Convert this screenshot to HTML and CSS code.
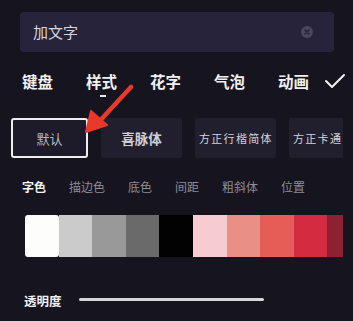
FILE: index.html
```html
<!DOCTYPE html>
<html>
<head>
<meta charset="utf-8">
<link rel="stylesheet" href="styles.css">
</head>
<body>
<div class="page">
  <div class="search">
    <span class="search-text">加文字</span>
    <span class="clear"><svg width="12" height="12" viewBox="0 0 12 12"><circle cx="6" cy="6" r="6" fill="#4a475c"/><path d="M4 4 L8 8 M8 4 L4 8" stroke="#25223a" stroke-width="1.6" stroke-linecap="round"/></svg></span>
  </div>
  <div class="tabs">
    <span class="tab">键盘</span>
    <span class="tab active">样式</span>
    <span class="tab">花字</span>
    <span class="tab">气泡</span>
    <span class="tab">动画</span>
    <span class="check"><svg width="22" height="16" viewBox="0 0 22 16"><path d="M2 8 L8 14 L20 2" fill="none" stroke="#f2f2f2" stroke-width="2" stroke-linecap="round" stroke-linejoin="round"/></svg></span>
  </div>
  <div class="fonts">
    <div class="card selected">默认</div>
    <div class="card bold">喜脉体</div>
    <div class="card script">方正行楷简体</div>
    <div class="card script">方正卡通</div>
  </div>
  <div class="subtabs">
    <span class="sub on">字色</span>
    <span class="sub">描边色</span>
    <span class="sub">底色</span>
    <span class="sub">间距</span>
    <span class="sub">粗斜体</span>
    <span class="sub">位置</span>
  </div>
  <div class="swatches">
    <span class="sw first" style="background:#fdfdfb"></span>
    <span class="sw" style="background:#cbcbcb"></span>
    <span class="sw" style="background:#999999"></span>
    <span class="sw" style="background:#6a6a6a"></span>
    <span class="sw" style="background:#020202"></span>
    <span class="sw" style="background:#f6ccd1"></span>
    <span class="sw" style="background:#ea8f85"></span>
    <span class="sw" style="background:#e65d57"></span>
    <span class="sw" style="background:#d52b41"></span>
    <span class="sw" style="background:#8c2133"></span>
  </div>
  <div class="opacity">
    <span class="op-label">透明度</span>
    <span class="slider"></span>
  </div>
  <svg class="arrow" width="60" height="60" viewBox="0 0 60 60">
    <path d="M50 3 L14 42" stroke="#e8392b" stroke-width="4.5" stroke-linecap="round"/>
    <path d="M5 48 L10 27 L26 41 Z" fill="#e8392b" stroke="#e8392b" stroke-width="2" stroke-linejoin="round"/>
  </svg>
</div>
</body>
</html>
```
FILE: styles.css
```css
html, body {
  margin: 0;
  padding: 0;
  background: #16141f;
}
body {
  font-family: "Noto Sans CJK SC", "Noto Sans", sans-serif;
  width: 353px;
  height: 321px;
  overflow: hidden;
}
.page {
  position: relative;
  width: 353px;
  height: 321px;
  padding-top: 12px;
  box-sizing: border-box;
}
.search {
  margin-left: 20px;
  width: 314px;
  height: 40px;
  background: #26233a;
  border-radius: 3px;
  display: flex;
  align-items: center;
  justify-content: space-between;
  padding: 0 21px 0 13px;
  box-sizing: border-box;
}
.search-text {
  color: #d8d6de;
  font-size: 15px;
  line-height: 20px;
}
.clear {
  display: flex;
}
.tabs {
  display: flex;
  align-items: center;
  height: 26px;
  margin-top: 16px;
  padding-left: 22px;
  gap: 32px;
}
.tab {
  position: relative;
  color: #f0f0f0;
  font-size: 15.5px;
  font-weight: 700;
  line-height: 26px;
  width: 32px;
}
.tab.active::after {
  content: "";
  position: absolute;
  left: 14px;
  top: 27px;
  width: 6px;
  height: 2px;
  background: #e8e8e8;
}
.check {
  display: flex;
  margin-left: -18px;
}
.fonts {
  display: flex;
  gap: 13px;
  margin-top: 24px;
  margin-left: 11px;
  width: 332px;
  overflow: hidden;
  height: 40px;
}
.card {
  flex: 0 0 81px;
  height: 40px;
  background: #211f2e;
  color: #c8c6cc;
  font-size: 12.5px;
  display: flex;
  align-items: center;
  justify-content: center;
  box-sizing: border-box;
  border-radius: 2px;
}
.card.selected {
  flex-basis: 77px;
  border: 2px solid #eeeeee;
  border-radius: 3px;
  background: #1d1b29;
  color: #b9b7bf;
  font-size: 13px;
}
.card.bold {
  font-weight: 700;
  color: #d0ced4;
  font-size: 13.5px;
}
.card.script {
  font-size: 11px;
  letter-spacing: 1.3px;
  color: #d4d2d8;
  font-family: "Noto Sans CJK JP", serif;
  justify-content: flex-start;
  padding-left: 4px;
}
.subtabs {
  display: flex;
  gap: 23px;
  margin-top: 20px;
  padding-left: 22px;
  height: 18px;
  align-items: center;
}
.sub {
  color: #8e8c96;
  font-size: 12px;
  line-height: 18px;
}
.sub.on {
  color: #f2f2f2;
  font-weight: 700;
}
.swatches {
  display: flex;
  margin-top: 19px;
  margin-left: 25px;
  width: 318px;
  height: 42px;
  overflow: hidden;
}
.sw {
  flex: 0 0 33.6px;
  height: 42px;
}
.sw.first {
  border-radius: 3px;
}
.opacity {
  display: flex;
  align-items: center;
  margin-top: 35px;
  padding-left: 24px;
  height: 18px;
}
.op-label {
  color: #f0f0f0;
  font-size: 12.5px;
  font-weight: 700;
  line-height: 18px;
}
.slider {
  margin-left: 17px;
  width: 185px;
  height: 3px;
  border-radius: 2px;
  background: #d6d6d6;
  margin-top: -3px;
}
.arrow {
  position: absolute;
  left: 81px;
  top: 84px;
}
```
